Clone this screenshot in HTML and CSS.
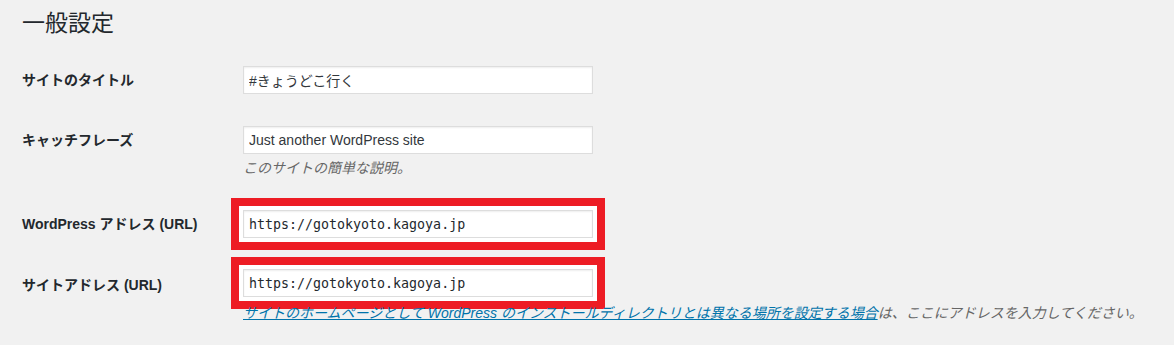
FILE: index.html
```html
<!DOCTYPE html>
<html lang="ja">
<head>
    <meta charset="UTF-8">
    <meta name="viewport" content="width=device-width, initial-scale=1.0">
    <title>一般設定</title>
    <link rel="stylesheet" href="styles.css">
</head>
<body>
    <div class="wrap">
        <h1>一般設定</h1>

        <div class="form">
            <div class="row row-title">
                <label class="label">サイトのタイトル</label>
                <div class="field">
                    <input class="text" type="text" value="#きょうどこ行く">
                </div>
            </div>

            <div class="row row-tagline">
                <label class="label">キャッチフレーズ</label>
                <div class="field">
                    <input class="text" type="text" value="Just another WordPress site">
                    <p class="desc">このサイトの簡単な説明。</p>
                </div>
            </div>

            <div class="row row-wpurl">
                <label class="label">WordPress アドレス (URL)</label>
                <div class="field">
                    <input class="text code marked" type="text" value="https://gotokyoto.kagoya.jp">
                </div>
            </div>

            <div class="row row-home">
                <label class="label">サイトアドレス (URL)</label>
                <div class="field">
                    <input class="text code marked" type="text" value="https://gotokyoto.kagoya.jp">
                    <p class="desc desc-home"><a href="#">サイトのホームページとして WordPress のインストールディレクトリとは異なる場所を設定する場合</a>は、ここにアドレスを入力してください。</p>
                </div>
            </div>
        </div>
    </div>
</body>
</html>
```

FILE: styles.css
```css
body{
    margin: 0;
    background: #f1f1f1;
    color: #23282d;
    font-family: "Liberation Sans", "Noto Sans CJK JP", sans-serif;
    font-size: 14px;
}
.wrap{
    padding: 9px 0 0 22px;
}
h1{
    margin: 0;
    font-size: 23px;
    line-height: 29px;
    font-weight: 400;
    color: #23282d;
}
.form{
    margin-top: 12px;
}
.row{
    display: grid;
    grid-template-columns: 221px 1fr;
    align-items: start;
    padding: 16px 0;
}
.row-tagline{
    padding-bottom: 17px;
}
.row-wpurl{
    padding-bottom: 15px;
}
.row-home{
    padding-bottom: 0;
}
.row-home .label{
    padding-top: 2px;
}
.label{
    font-weight: 700;
    line-height: 28px;
    color: #23282d;
}
.field{
    display: flex;
    flex-direction: column;
    align-items: flex-start;
}
.text{
    box-sizing: border-box;
    width: 350px;
    height: 28px;
    margin: 0;
    padding: 3px 5px;
    border: 1px solid #ddd;
    box-shadow: inset 0 1px 2px rgba(0,0,0,.07);
    background: #fff;
    color: #32373c;
    font-family: "Liberation Sans", "Noto Sans CJK JP", sans-serif;
    font-size: 14px;
    outline: none;
}
.code{
    font-family: "DejaVu Sans Mono", monospace;
    font-size: 13.3px;
    color: #23282d;
}
/* red highlight drawn round the field */
.marked{
    box-shadow: inset 0 1px 2px rgba(0,0,0,.07), 0 0 0 4px #fff, 0 0 0 12px #ed1c24;
}
.desc{
    margin: 5px 0 0;
    font-size: 14px;
    line-height: 18px;
    font-style: italic;
    color: #666;
}
.desc-home{
    margin-top: 7px;
}
.desc a{
    color: #0073aa;
    text-decoration: underline;
}
```
